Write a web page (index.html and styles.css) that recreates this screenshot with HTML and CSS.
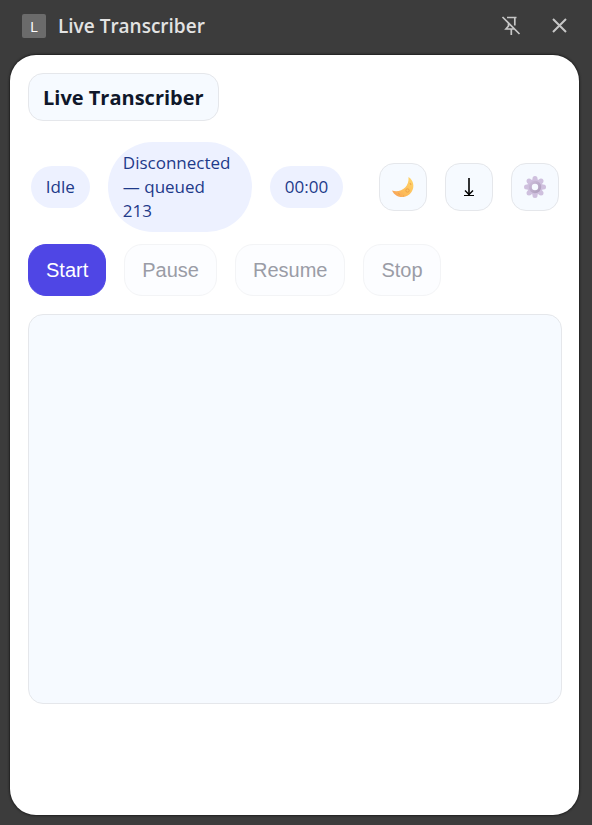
FILE: index.html
```html
<!DOCTYPE html>
<html lang="en">
<head>
<meta charset="utf-8">
<meta name="viewport" content="width=device-width, initial-scale=1">
<title>Live Transcriber</title>
<link rel="stylesheet" href="styles.css">
</head>
<body>
<header class="side-header">
  <span class="badge" aria-hidden="true">L</span>
  <span class="side-title">Live Transcriber</span>
  <button class="chrome-btn" type="button" aria-label="Unpin">
    <svg width="20" height="20" viewBox="0 0 20 20" fill="none" stroke="currentColor" stroke-width="1.7"><path d="M6 1.5h9.5M13.8 1.5v8M7.5 7v3l-2.5 3h8M10.3 13v6M1.5 1l17 17"/></svg>
  </button>
  <button class="chrome-btn" type="button" aria-label="Close">
    <svg width="20" height="20" viewBox="0 0 20 20" fill="none" stroke="currentColor" stroke-width="2"><path d="M4 3l13 13M17 3L4 16"/></svg>
  </button>
</header>
<main class="panel">
  <h1 class="brand">Live Transcriber</h1>
  <div class="status-row">
    <div class="pills">
      <span class="pill">Idle</span>
      <span class="pill pill-connection">Disconnected — queued 213</span>
      <span class="pill">00:00</span>
    </div>
    <div class="tools">
      <button class="tool" type="button" aria-label="Toggle theme">
        <svg width="24" height="24" viewBox="0 0 24 24">
          <defs><linearGradient id="moon" x1="1" y1="0" x2="0" y2="1"><stop offset="0" stop-color="#ffd66b"/><stop offset=".6" stop-color="#fdbd5a"/><stop offset="1" stop-color="#f79c58"/></linearGradient></defs>
          <path d="M17.5 2C22.5 5 24 12 20.5 17C16 24 5 24 1 15.500C9 18 18.500 13 17.500 2Z" fill="url(#moon)"/>
          <g fill="none" stroke="#eda24a"><circle cx="16.500" cy="15.500" r="1.700"/><path d="M19 8l1 2M7 18.500l2 1M12 21h1"/></g>
        </svg>
      </button>
      <button class="tool" type="button" aria-label="Download transcript">
        <svg width="24" height="24" viewBox="0 0 24 24" fill="none" stroke="currentColor"><path d="M12 3v17" stroke-width="1.600"/><path d="M8 15.500l4 4l4-4" stroke-width="1.400"/><path d="M7 20.500h10"/></svg>
      </button>
      <button class="tool" type="button" aria-label="Settings">
        <svg width="24" height="24" viewBox="0 0 24 24">
          <defs><linearGradient id="gear" x1="0" y1="0" x2="1" y2="1"><stop offset="0" stop-color="#cabbd8"/><stop offset="1" stop-color="#af9fbd"/></linearGradient></defs>
          <g fill="#cfc0de">
            <circle cx="12" cy="3.500" r="2.500"/><circle cx="18" cy="6" r="2.500"/><circle cx="20.500" cy="12" r="2.500"/><circle cx="18" cy="18" r="2.500"/>
            <circle cx="12" cy="20.500" r="2.500"/><circle cx="6" cy="18" r="2.500"/><circle cx="3.500" cy="12" r="2.500"/><circle cx="6" cy="6" r="2.500"/>
            <circle cx="12" cy="12" r="8"/>
          </g>
          <circle cx="12" cy="12" r="4.700" fill="#f6faff" stroke="url(#gear)" stroke-width="3"/>
        </svg>
      </button>
    </div>
  </div>
  <div class="controls">
    <button class="btn btn-primary" type="button">Start</button>
    <button class="btn" type="button" disabled>Pause</button>
    <button class="btn" type="button" disabled>Resume</button>
    <button class="btn" type="button" disabled>Stop</button>
  </div>
  <section class="transcript" aria-label="Transcript"></section>
</main>
</body>
</html>
```
FILE: styles.css
```css
* { box-sizing: border-box; }

body {
  margin: 0;
  min-height: 100vh;
  padding: 0 13px 10px 10px;
  display: flex;
  flex-direction: column;
  background: #3c3c3c;
  color: #0f172a;
  font-family: "Segoe UI", "Open Sans", "Noto Sans", sans-serif;
}

button { margin: 0; padding: 0; cursor: pointer; }

.side-header {
  display: flex;
  align-items: center;
  height: 55px;
  padding: 0 10px 4px 12px;
  color: #e3e3e3;
}

.badge {
  width: 24px;
  height: 24px;
  border-radius: 2px;
  background: #6b6b6b;
  color: #fff;
  font-size: 15px;
  line-height: 24px;
  text-align: center;
}

.side-title {
  flex: 1;
  margin-left: 12px;
  font-size: 19px;
  font-weight: 600;
  line-height: 28px;
}

.chrome-btn {
  display: flex;
  margin-left: 28px;
  border: 0;
  background: none;
  color: #c7c7c7;
}

.panel {
  flex: 1;
  padding: 18px 17px 18px 18px;
  border-radius: 26px;
  background: #fff;
  box-shadow: 0 0 2px 1px #202020;
}

.brand {
  width: fit-content;
  margin: 0 0 21px;
  padding: 0 14px;
  border: 1px solid #e5e7eb;
  border-radius: 15px;
  background: #f6faff;
  font-size: 20px;
  font-weight: 700;
  line-height: 48px;
  height: 48px;
}

.status-row {
  display: flex;
  align-items: center;
  justify-content: center;
  gap: 36px;
  margin-bottom: 12px;
}

.pills, .tools, .controls { display: flex; align-items: center; gap: 18px; }

.pill {
  padding: 9px 15px;
  border-radius: 45px;
  background: #edf1ff;
  color: #1e3a8a;
  font-size: 17px;
  line-height: 24px;
}

.pill-connection { width: 144px; }

.tool {
  display: grid;
  place-items: center;
  width: 48px;
  height: 48px;
  border: 1px solid #e5e7eb;
  border-radius: 15px;
  background: #f6faff;
  color: #000;
}

.controls { margin-bottom: 18px; }

.btn {
  height: 52px;
  padding: 0 17px;
  border: 1px solid #e5e7eb;
  border-radius: 18px;
  background: #f6faff;
  color: #0f172a;
  font-family: "Liberation Sans", Arial, sans-serif;
  font-size: 20px;
}

.btn:disabled {
  border-color: #f3f4f6;
  background: #fcfdff;
  color: #9a9ca6;
  cursor: default;
}

.btn-primary {
  border-color: #4f46e5;
  background: #4f46e5;
  color: #fff;
}

.transcript {
  min-height: 390px;
  border: 1px solid #e5e7eb;
  border-radius: 15px;
  background: #f6faff;
}
```
